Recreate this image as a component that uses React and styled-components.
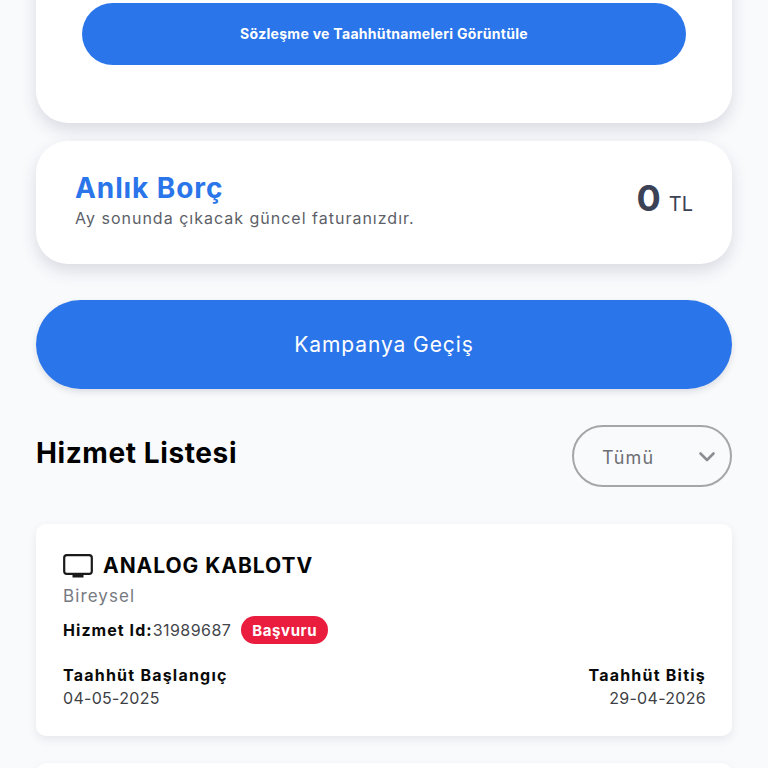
import styled, { createGlobalStyle } from 'styled-components'

const GlobalStyle = createGlobalStyle`
  html, body {
    margin: 0;
    height: 768px;
    overflow: hidden;
    background: #f9fafc;
    font-family: "Inter", "Liberation Sans", sans-serif;
  }
  * { box-sizing: border-box; }
`

const Page = styled.div`
  height: 768px;
  overflow: hidden;
  padding: 0 36px;
  background: #f9fafc;
`

// ekran yukari kaydirilmis, ust kartin basi gorunmuyor
const Scroller = styled.div`
  display: flex;
  flex-direction: column;
  margin-top: -60px;
`

const BigCard = styled.section`
  background: #fff;
  border-radius: 32px;
  box-shadow: 0 7px 16px rgba(40, 50, 80, 0.15);
  padding: 63px 46px 58px;
`

const WideButton = styled.button`
  display: block;
  width: 100%;
  height: 62px;
  border: 0;
  border-radius: 31px;
  background: #2b75ea;
  color: #fff;
  font-family: inherit;
  font-size: 14px;
  font-weight: 700;
  letter-spacing: 0.3px;
  padding-bottom: 2px;
`

const DebtCard = styled.section`
  margin-top: 18px;
  height: 123px;
  background: #fff;
  border-radius: 32px;
  box-shadow: 0 7px 16px rgba(40, 50, 80, 0.15);
  padding: 0 39px;
  display: flex;
  align-items: center;
  justify-content: space-between;
`

const DebtText = styled.div`
  padding-bottom: 5px;
`

const DebtTitle = styled.div`
  color: #2b75ea;
  font-size: 28px;
  line-height: 30px;
  font-weight: 700;
  letter-spacing: 0.9px;
  margin-bottom: 5px;
`

const DebtNote = styled.div`
  color: #5c5f68;
  font-size: 16px;
  line-height: 20px;
  letter-spacing: 1px;
`

const Amount = styled.div`
  color: #3b4256;
  font-size: 36px;
  font-weight: 700;
  line-height: 40px;
  display: flex;
  align-items: baseline;
  gap: 8px;
  padding-bottom: 3px;
  span {
    font-size: 20px;
    font-weight: 400;
  }
`

const CampaignButton = styled.button`
  display: block;
  width: 100%;
  margin-top: 36px;
  height: 89px;
  border: 0;
  border-radius: 45px;
  background: #2b75ea;
  color: #fff;
  font-family: inherit;
  font-size: 21px;
  font-weight: 400;
  letter-spacing: 0.9px;
  box-shadow: 0 3px 6px rgba(40, 50, 80, 0.14);
`

const ListHeader = styled.div`
  margin-top: 36px;
  display: flex;
  align-items: center;
  justify-content: space-between;
`

const ListTitle = styled.h2`
  margin: 0 0 7px;
  color: #000;
  font-size: 28px;
  font-weight: 700;
  letter-spacing: 0.6px;
`

const Select = styled.div`
  width: 160px;
  height: 62px;
  border: 2px solid #a6a6a8;
  border-radius: 31px;
  display: flex;
  align-items: center;
  justify-content: space-between;
  padding: 2px 14px 0 28px;
  color: #6d6f75;
  font-size: 18px;
  letter-spacing: 1.1px;
`

const ServiceCard = styled.article`
  margin-top: 37px;
  height: 212px;
  background: #fff;
  border-radius: 10px;
  box-shadow: 0 4px 10px rgba(40, 50, 80, 0.09);
  padding: 28px 26px 0 27px;
`

const NextCard = styled(ServiceCard)`
  margin-top: 27px;
`

const ServiceName = styled.div`
  display: flex;
  align-items: center;
  gap: 10px;
  color: #050505;
  font-size: 21px;
  line-height: 28px;
  font-weight: 700;
  letter-spacing: 0.95px;
`

const ServiceType = styled.div`
  margin-top: 4px;
  color: #777a82;
  font-size: 17px;
  line-height: 24px;
  letter-spacing: 1.1px;
`

const IdRow = styled.div`
  margin-top: 8px;
  display: flex;
  align-items: center;
  gap: 10px;
  height: 28px;
  color: #44464c;
  font-size: 16px;
  letter-spacing: 0.45px;
  b {
    color: #0a0a0a;
    font-weight: 700;
    letter-spacing: 1.05px;
  }
`

const Badge = styled.span`
  display: inline-flex;
  align-items: center;
  justify-content: center;
  width: 87px;
  height: 28px;
  border-radius: 14px;
  background: #ea1d3f;
  color: #fff;
  font-size: 15px;
  font-weight: 700;
  letter-spacing: 0.6px;
`

const Dates = styled.div`
  margin-top: 20px;
  display: flex;
  justify-content: space-between;
`

const DateCol = styled.div`
  text-align: ${(p) => (p.$right ? 'right' : 'left')};
`

const DateLabel = styled.div`
  color: #0a0a0a;
  font-size: 16px;
  line-height: 23px;
  font-weight: 700;
  letter-spacing: 1.22px;
`

const DateValue = styled.div`
  color: #3d3f45;
  font-size: 16px;
  line-height: 23px;
  letter-spacing: 0.3px;
`

const TvIcon = () => (
  <svg width="30" height="25" viewBox="0 0 30 25" fill="none">
    <rect x="1.2" y="1.2" width="27.6" height="18.6" rx="2.6" stroke="#1a1a1a" strokeWidth="2.2" />
    <rect x="9.5" y="20" width="11" height="3.5" fill="#1a1a1a" />
  </svg>
)

const Chevron = () => (
  <svg width="18" height="12" viewBox="0 0 18 12" fill="none">
    <path d="M2.5 2.5 L9 9 L15.5 2.5" stroke="#8b8d92" strokeWidth="2.6" strokeLinecap="round" strokeLinejoin="round" />
  </svg>
)

function App() {
  return (
    <Page>
      <GlobalStyle />
      <Scroller>
        <BigCard>
          <WideButton>Sözleşme ve Taahhütnameleri Görüntüle</WideButton>
        </BigCard>

        <DebtCard>
          <DebtText>
            <DebtTitle>Anlık Borç</DebtTitle>
            <DebtNote>Ay sonunda çıkacak güncel faturanızdır.</DebtNote>
          </DebtText>
          <Amount>
            0 <span>TL</span>
          </Amount>
        </DebtCard>

        <CampaignButton>Kampanya Geçiş</CampaignButton>

        <ListHeader>
          <ListTitle>Hizmet Listesi</ListTitle>
          <Select>
            Tümü
            <Chevron />
          </Select>
        </ListHeader>

        <ServiceCard>
          <ServiceName>
            <TvIcon />
            ANALOG KABLOTV
          </ServiceName>
          <ServiceType>Bireysel</ServiceType>
          <IdRow>
            <span>
              <b>Hizmet Id:</b>31989687
            </span>
            <Badge>Başvuru</Badge>
          </IdRow>
          <Dates>
            <DateCol>
              <DateLabel>Taahhüt Başlangıç</DateLabel>
              <DateValue>04-05-2025</DateValue>
            </DateCol>
            <DateCol $right>
              <DateLabel>Taahhüt Bitiş</DateLabel>
              <DateValue>29-04-2026</DateValue>
            </DateCol>
          </Dates>
        </ServiceCard>

        <NextCard />
      </Scroller>
    </Page>
  )
}

export default App
